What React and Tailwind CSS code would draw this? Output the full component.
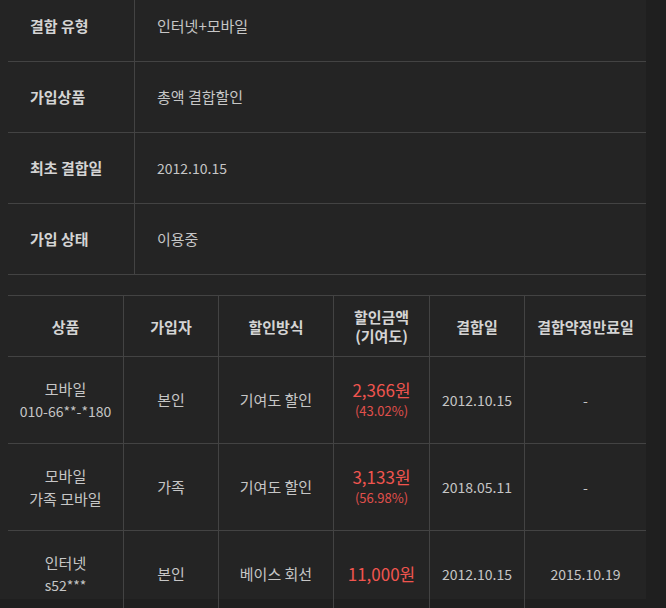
import React from "react";

const font = { fontFamily: '"Noto Sans CJK KR", "Noto Sans", sans-serif' };

const info = [
  ["결합 유형", "인터넷+모바일", false],
  ["가입상품", "총액 결합할인", false],
  ["최초 결합일", "2012.10.15", true],
  ["가입 상태", "이용중", false],
];

const rows = [
  { p: ["모바일", "010-66**-*180"], who: "본인", how: "기여도 할인", amt: "2,366원", pct: "(43.02%)", date: "2012.10.15", end: "-" },
  { p: ["모바일", "가족 모바일"], who: "가족", how: "기여도 할인", amt: "3,133원", pct: "(56.98%)", date: "2018.05.11", end: "-" },
  { p: ["인터넷", "s52***"], who: "본인", how: "베이스 회선", amt: "11,000원", pct: null, date: "2012.10.15", end: "2015.10.19" },
];

const cols = "grid grid-cols-[116px_95px_115px_96px_95px_121px]";
const cell = "flex flex-col items-center justify-center text-center border-r border-[#434343]";
const lastCell = "flex flex-col items-center justify-center text-center";

export default function App() {
  return (
    <div className="w-[666px] h-[608px] overflow-hidden bg-[#1f1f1f] text-[15px]" style={font}>
      <div className="w-[646px] h-full bg-[#242424] pl-[8px]">
        <div className="-mt-[9px]">
          {info.map(([k, v, num]) => (
            <div key={k} className="flex h-[71px] border-b border-[#434343]">
              <div className="w-[127px] border-r border-[#434343] flex items-center pl-[22px] font-semibold text-[#d4d4d4]">
                {k}
              </div>
              <div className={`flex-1 flex items-center pl-[22px] text-[#c6c6c6] ${num ? "text-[14px]" : ""}`}>{v}</div>
            </div>
          ))}
        </div>
        <div className="mt-[20px] border-t border-[#434343]">
          <div className={`${cols} h-[61px] border-b border-[#434343] font-semibold text-[#d4d4d4] leading-[19px]`}>
            <div className={cell}>상품</div>
            <div className={cell}>가입자</div>
            <div className={cell}>할인방식</div>
            <div className={cell}>
              <span>할인금액</span>
              <span>(기여도)</span>
            </div>
            <div className={cell}>결합일</div>
            <div className={lastCell}>결합약정만료일</div>
          </div>
          {rows.map((r, i) => (
            <div key={i} className={`${cols} h-[87px] border-b border-[#434343] text-[#c6c6c6]`}>
              <div className={`${cell} leading-[23px]`}>
                <span>{r.p[0]}</span>
                <span className={i === 1 ? "" : "text-[14px]"}>{r.p[1]}</span>
              </div>
              <div className={cell}>{r.who}</div>
              <div className={cell}>{r.how}</div>
              <div className={cell}>
                <span className="text-[17px] leading-[22px] text-[#f0554f]">{r.amt}</span>
                {r.pct && <span className="text-[13px] leading-[20px] text-[#e0504c]">{r.pct}</span>}
              </div>
              <div className={`${cell} text-[14px]`}>{r.date}</div>
              <div className={`${lastCell} text-[14px]`}>{r.end}</div>
            </div>
          ))}
        </div>
      </div>
    </div>
  );
}
